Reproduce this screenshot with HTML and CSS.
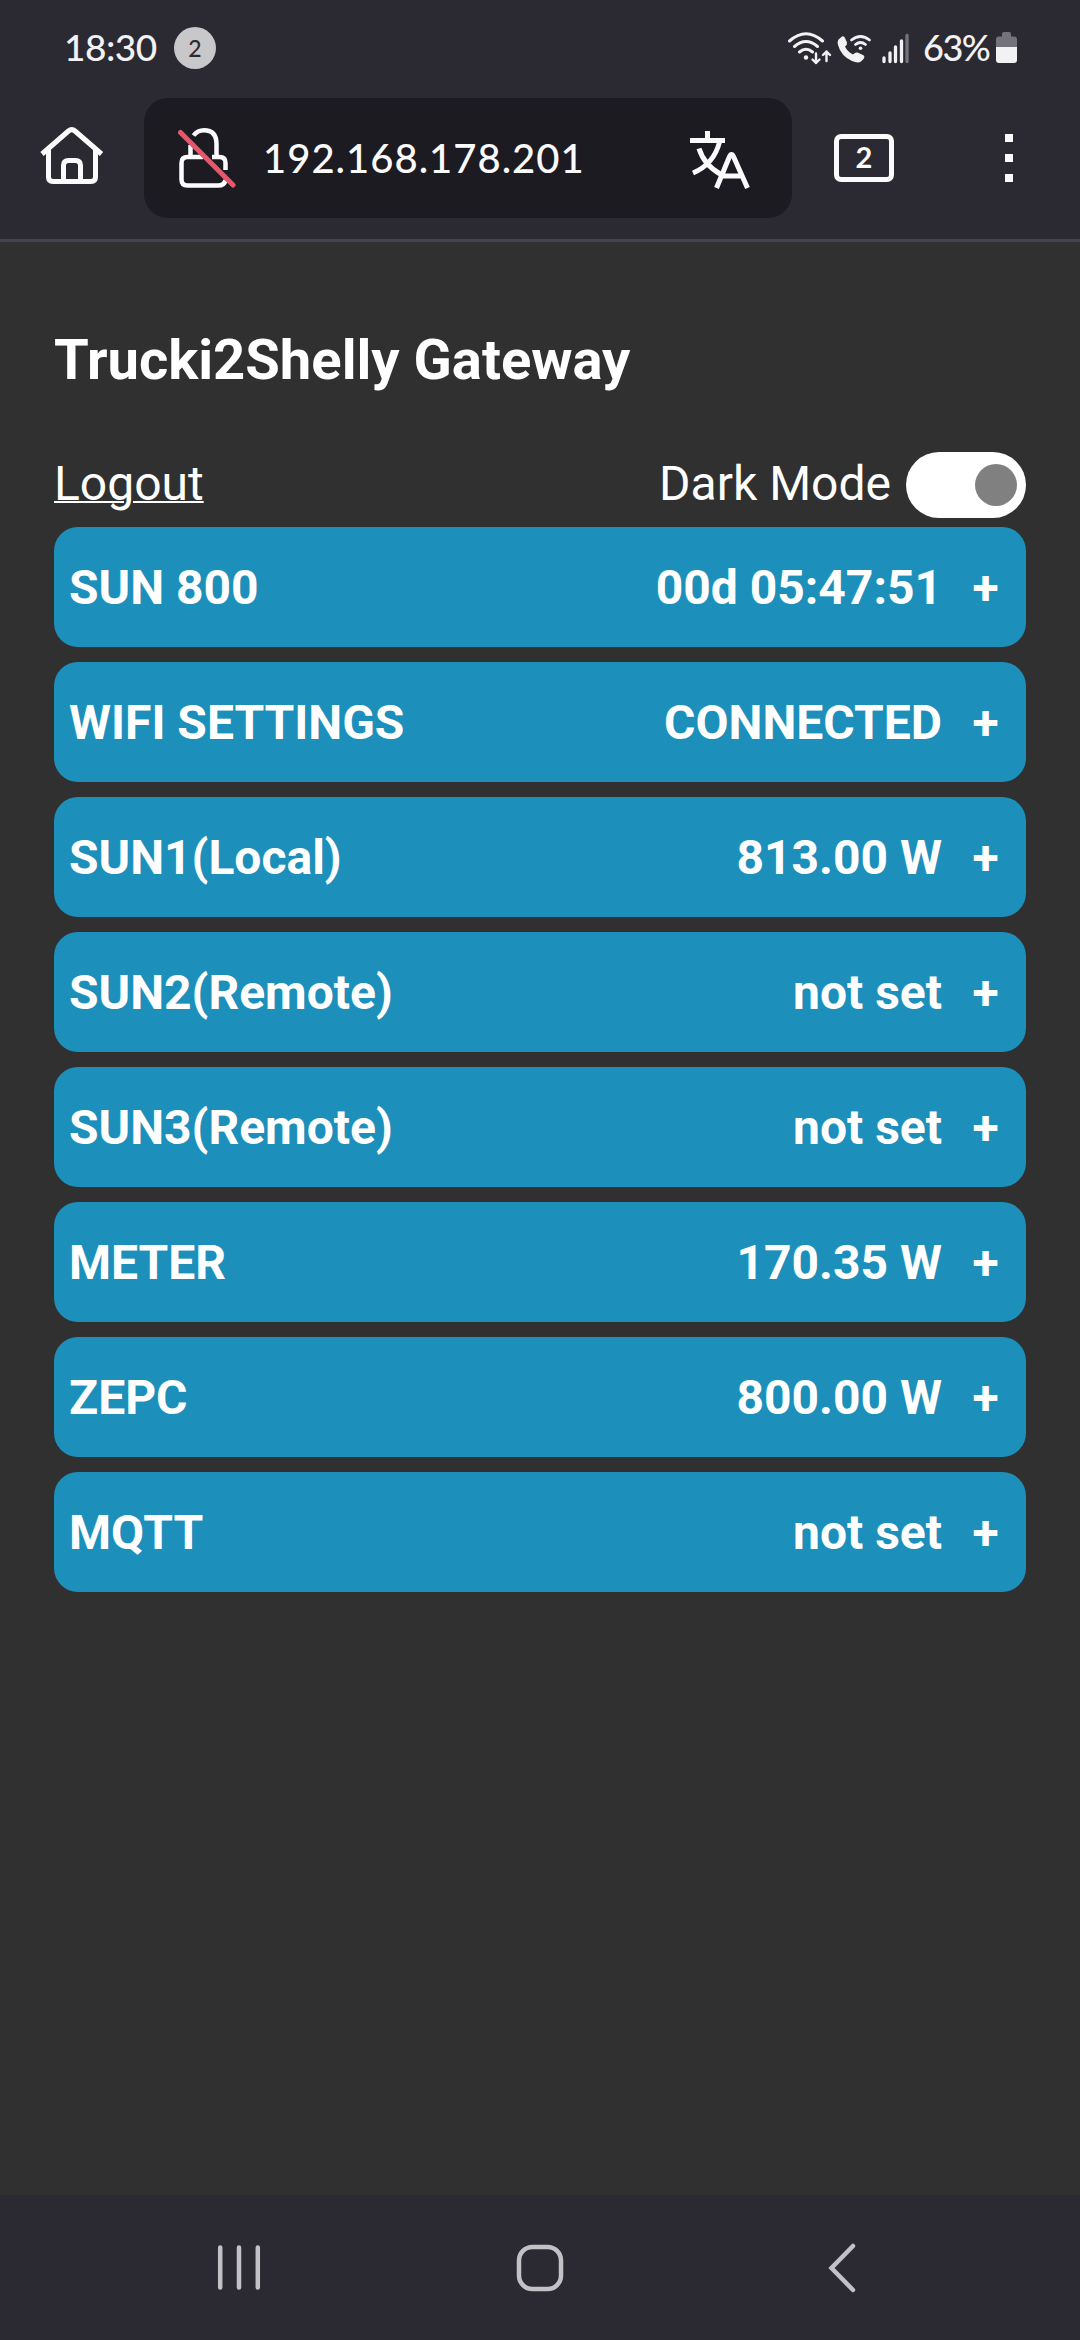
FILE: index.html
```html
<!DOCTYPE html>
<html lang="en">
<head>
    <meta charset="UTF-8">
    <meta name="viewport" content="width=device-width, initial-scale=1.0">
    <title>Trucki2Shelly Gateway</title>
    <link rel="stylesheet" href="styles.css">
</head>
<body>
    <header class="browser">
        <div class="status-bar">
            <span class="clock">18:30</span>
            <span class="badge">2</span>
            <svg class="status-icons" width="124" height="40" viewBox="784 26 124 40" fill="none" stroke="#f2f2f4" stroke-linecap="round">
                <!-- wifi -->
                <path d="M788.500 40 Q805 25.500 821.500 40M793.500 45.500 Q805 35.500 816.500 45.500M798.500 51 Q805 45.500 811.500 51" stroke-width="3"/>
                <circle cx="805" cy="56.500" r="2.200" fill="#f2f2f4" stroke="none"/>
                <path d="M815 52.500V62M811.500 58.500L815 62L818.500 58.500M825.500 60V50.500M822 54L825.500 50.500L829 54" stroke-width="2.400" stroke-linejoin="round"/>
                <!-- wifi calling -->
                <path d="M837.500 38.500L841 35.500Q843 34.500 844 37L846 41.500Q846.500 43.500 844 45.500Q846.500 51 852 53.500Q854.500 51 856.500 51.500L862 54Q864.500 55.500 862.500 58L860 60.500Q857 62.500 851 60Q840 55 837 44Q836 40.500 837.500 38.500Z" fill="#f2f2f4" stroke="none"/>
                <path d="M850.500 39Q859.500 32 868.500 39M854.500 43.500Q859.500 39.500 864.500 43.500" stroke-width="2.800"/>
                <circle cx="859.500" cy="47.200" r="1.800" fill="#f2f2f4" stroke="none"/>
                <!-- signal -->
                <path d="M883 57V60.500M889 52V60.500M894.500 46V60.500M900.500 40V60.500" stroke-width="3.300"/>
                <path d="M906 34.500V60.500" stroke="#747379" stroke-width="3.300"/>
            </svg>
            <span class="percent">63%</span>
            <svg class="battery" width="21" height="31" viewBox="0 0 21 31">
                <path d="M3 4.500H6V2Q6 0 8 0H13Q15 0 15 2V4.500H18Q21 4.500 21 7.500V15H0V7.500Q0 4.500 3 4.500Z" fill="#747379"/>
                <path d="M0 15H21V28Q21 31 18 31H3Q0 31 0 28Z" fill="#f2f2f4"/>
            </svg>
        </div>
        <div class="toolbar">
            <svg class="home" width="64" height="58" viewBox="0 0 64 58" fill="none" stroke="#fbfbfe" stroke-width="5">
                <path d="M2 27L28.500 4Q31.800 1.200 35 4L61.500 27"/>
                <path d="M8.500 22V50Q8.500 54.500 13 54.500H51Q55.500 54.500 55.500 50V22"/>
                <path d="M23.500 54V38.500Q23.500 33.500 28.500 33.500H35.500Q40.500 33.500 40.500 38.500V54"/>
            </svg>
            <div class="address">
                <svg class="lock" width="58" height="62" viewBox="0 0 58 62" fill="none" stroke="#fbfbfe" stroke-width="4.500">
                    <path d="M15.500 8.500Q19.500 3.200 26 3.200Q38.500 3.200 38.500 17V29M12.500 18V29"/>
                    <path d="M25 30H9.500Q3.500 30 3.500 36V52.500Q3.500 58.500 9.500 58.500H40Q46.500 58.500 47.500 53M34 30H41.500Q47.500 30 47.500 36V43"/>
                    <path d="M2.500 5.500L55 58" stroke="#e9566a" stroke-width="5" stroke-linecap="round"/>
                </svg>
                <span class="url">192.168.178.201</span>
                <svg class="translate" width="60" height="58" viewBox="0 0 60 58" fill="none" stroke="#fbfbfe" stroke-width="5">
                    <path d="M17.500 0V10M0 9.500H35M29.500 11Q24 33 3 42M9 17.500Q14 34 31 43.500"/>
                    <path d="M26.500 57L39.500 25.500Q41.500 21.500 43.500 25.500L57.500 57M31 45H53"/>
                </svg>
            </div>
            <div class="tabs">2</div>
            <div class="menu"><i></i><i></i><i></i></div>
        </div>
    </header>

    <main class="page">
        <h3 class="title">Trucki2Shelly Gateway</h3>
        <div class="top-row">
            <a class="logout">Logout</a>
            <div class="dark-mode">
                <span class="label">Dark Mode</span>
                <span class="switch"><span class="knob"></span></span>
            </div>
        </div>
        <div class="panels">
            <button class="panel"><span>SUN 800</span><span class="value">00d 05:47:51</span><span class="plus">+</span></button>
            <button class="panel"><span>WIFI SETTINGS</span><span class="value">CONNECTED</span><span class="plus">+</span></button>
            <button class="panel"><span>SUN1(Local)</span><span class="value">813.00 W</span><span class="plus">+</span></button>
            <button class="panel"><span>SUN2(Remote)</span><span class="value">not set</span><span class="plus">+</span></button>
            <button class="panel"><span>SUN3(Remote)</span><span class="value">not set</span><span class="plus">+</span></button>
            <button class="panel"><span>METER</span><span class="value">170.35 W</span><span class="plus">+</span></button>
            <button class="panel"><span>ZEPC</span><span class="value">800.00 W</span><span class="plus">+</span></button>
            <button class="panel"><span>MQTT</span><span class="value">not set</span><span class="plus">+</span></button>
        </div>
    </main>

    <nav class="nav-bar">
        <svg width="44" height="48" viewBox="0 0 44 48" fill="none" stroke="#c2c1c5" stroke-width="4.500" stroke-linecap="round">
            <path d="M3.200 3.500V43.500M22 3.500V43.500M40.800 3.500V43.500"/>
        </svg>
        <svg width="48" height="48" viewBox="0 0 48 48" fill="none" stroke="#c2c1c5" stroke-width="4.500">
            <rect x="3" y="3" width="42" height="42" rx="13.500"/>
        </svg>
        <svg width="28" height="50" viewBox="0 0 28 50" fill="none" stroke="#c2c1c5" stroke-width="4.500" stroke-linecap="round">
            <path d="M25 3L3.500 25L25 47"/>
        </svg>
    </nav>
</body>
</html>
```

FILE: styles.css
```css
* {
    box-sizing: border-box;
}
body {
    margin: 0;
    height: 2340px;
    display: flex;
    flex-direction: column;
    background: #303030;
    color: white;
    font-family: Roboto, sans-serif;
    font-size: 48px;
}
svg {
    display: block;
    flex: none;
}

/* browser chrome */
.browser {
    height: 242px;
    background: #2b2a33;
    border-bottom: 3px solid #45444c;
    color: #fbfbfe;
    font-family: Lato, sans-serif;
    font-weight: 500;
}
.status-bar {
    height: 98px;
    padding: 0 63px 4px 64px;
    display: flex;
    align-items: center;
    color: #f2f2f4;
}
.clock {
    width: 110px;
    padding-bottom: 2px;
    font-size: 37px;
    letter-spacing: -0.5px;
}
.badge {
    width: 42px;
    height: 42px;
    margin-top: 2px;
    border-radius: 50%;
    background: #c8c8ca;
    color: #2b2a33;
    font-size: 23px;
    line-height: 42px;
    text-align: center;
}
.status-icons {
    margin-left: auto;
}
.percent {
    width: 72px;
    margin-left: 14px;
    font-size: 36px;
    letter-spacing: -1.5px;
}
.battery {
    margin-left: 1px;
}
.toolbar {
    height: 120px;
    padding: 0 67px 0 40px;
    display: flex;
    align-items: center;
}
.home {
    margin-top: -4px;
}
.address {
    width: 648px;
    height: 120px;
    margin-left: 40px;
    padding: 0 42px 0 34px;
    display: flex;
    align-items: center;
    border-radius: 24px;
    background: #1c1b22;
}
.url {
    margin-left: 27px;
    font-size: 40px;
    letter-spacing: 1px;
}
.translate {
    margin-top: 4px;
    margin-left: auto;
}
.tabs {
    width: 60px;
    height: 48px;
    margin-left: 42px;
    border: 5px solid #fbfbfe;
    border-radius: 7px;
    font-size: 29px;
    font-weight: bold;
    line-height: 36px;
    text-align: center;
}
.menu {
    width: 8px;
    height: 48px;
    margin-left: auto;
    display: flex;
    flex-direction: column;
    justify-content: space-between;
}
.menu i {
    height: 8px;
    background: #fbfbfe;
}

/* gateway page */
.page {
    flex: 1;
    padding: 85px 54px 0;
}
.title {
    margin: 0;
    font-size: 56.16px;
    line-height: 66px;
}
.top-row {
    height: 66px;
    margin-top: 59px;
    display: flex;
    align-items: center;
    justify-content: space-between;
}
.logout {
    padding-bottom: 3px;
    text-decoration: underline;
    text-decoration-thickness: 2px;
}
.dark-mode {
    display: flex;
    align-items: center;
    gap: 15px;
}
.dark-mode .label {
    padding-bottom: 3px;
}
.switch {
    width: 120px;
    height: 66px;
    padding: 12px 9px;
    display: flex;
    justify-content: flex-end;
    border-radius: 33px;
    background: white;
}
.knob {
    width: 42px;
    height: 42px;
    border-radius: 50%;
    background: gray;
}
.panels {
    margin-top: 9px;
    display: flex;
    flex-direction: column;
    gap: 15px;
}
.panel {
    height: 120px;
    padding: 0 27px 0 15px;
    display: flex;
    align-items: center;
    border: 0;
    border-radius: 24px;
    background: #1c90bb;
    color: white;
    font: bold 48px Roboto, sans-serif;
}
.value {
    margin-left: auto;
}
.plus {
    width: 27px;
    margin-left: 30px;
}

/* system navigation */
.nav-bar {
    height: 145px;
    padding: 0 87px 0 88px;
    display: grid;
    grid-template-columns: repeat(3, 1fr);
    align-items: center;
    justify-items: center;
    background: #2b2a33;
}
```
